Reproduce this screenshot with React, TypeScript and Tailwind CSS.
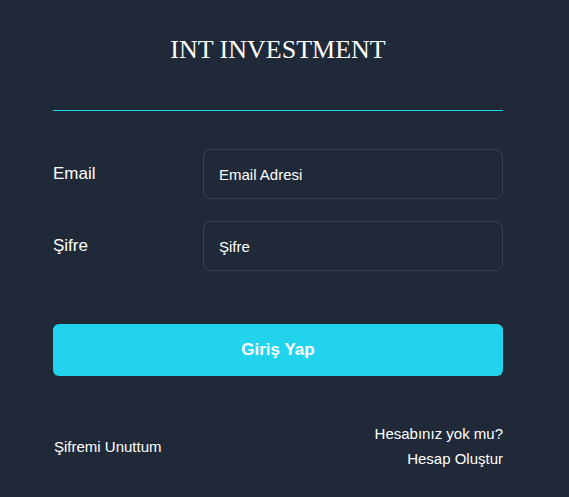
export default function App() {
  return (
    <div className="min-h-[497px] bg-[#1f2937] font-['Liberation_Sans',Arial,sans-serif] text-white">
      <div className="ml-[53px] w-[450px] pt-[35px]">
        <h1 className="text-center font-['Liberation_Serif','Times_New_Roman',serif] text-[26px] leading-[30px]">
          INT INVESTMENT
        </h1>
        <div className="mt-[45px] h-px bg-[#22d3ee]" />

        <form className="mt-[38px]" onSubmit={(e) => e.preventDefault()}>
          <div className="flex items-center">
            <label className="w-[150px] text-[17px]">Email</label>
            <input
              type="text"
              placeholder="Email Adresi"
              className="h-[50px] w-[300px] rounded-lg border border-[#3a4352] bg-transparent px-[15px] text-[15px] text-white placeholder:text-white focus:outline-none"
            />
          </div>
          <div className="mt-[22px] flex items-center">
            <label className="w-[150px] text-[17px]">Şifre</label>
            <input
              type="password"
              placeholder="Şifre"
              className="h-[50px] w-[300px] rounded-lg border border-[#3a4352] bg-transparent px-[15px] text-[15px] text-white placeholder:text-white focus:outline-none"
            />
          </div>

          <button
            type="submit"
            className="mt-[53px] h-[52px] w-full rounded-md bg-[#22d3ee] text-[17px] font-bold text-white"
          >
            Giriş Yap
          </button>
        </form>

        <div className="mt-[49px] flex items-center justify-between text-[15px]">
          <a href="#" className="pl-px pt-[3px]">Şifremi Unuttum</a>
          <div className="flex flex-col items-end gap-[8px] leading-[17px]">
            <span>Hesabınız yok mu?</span>
            <a href="#">Hesap Oluştur</a>
          </div>
        </div>
      </div>
    </div>
  )
}
